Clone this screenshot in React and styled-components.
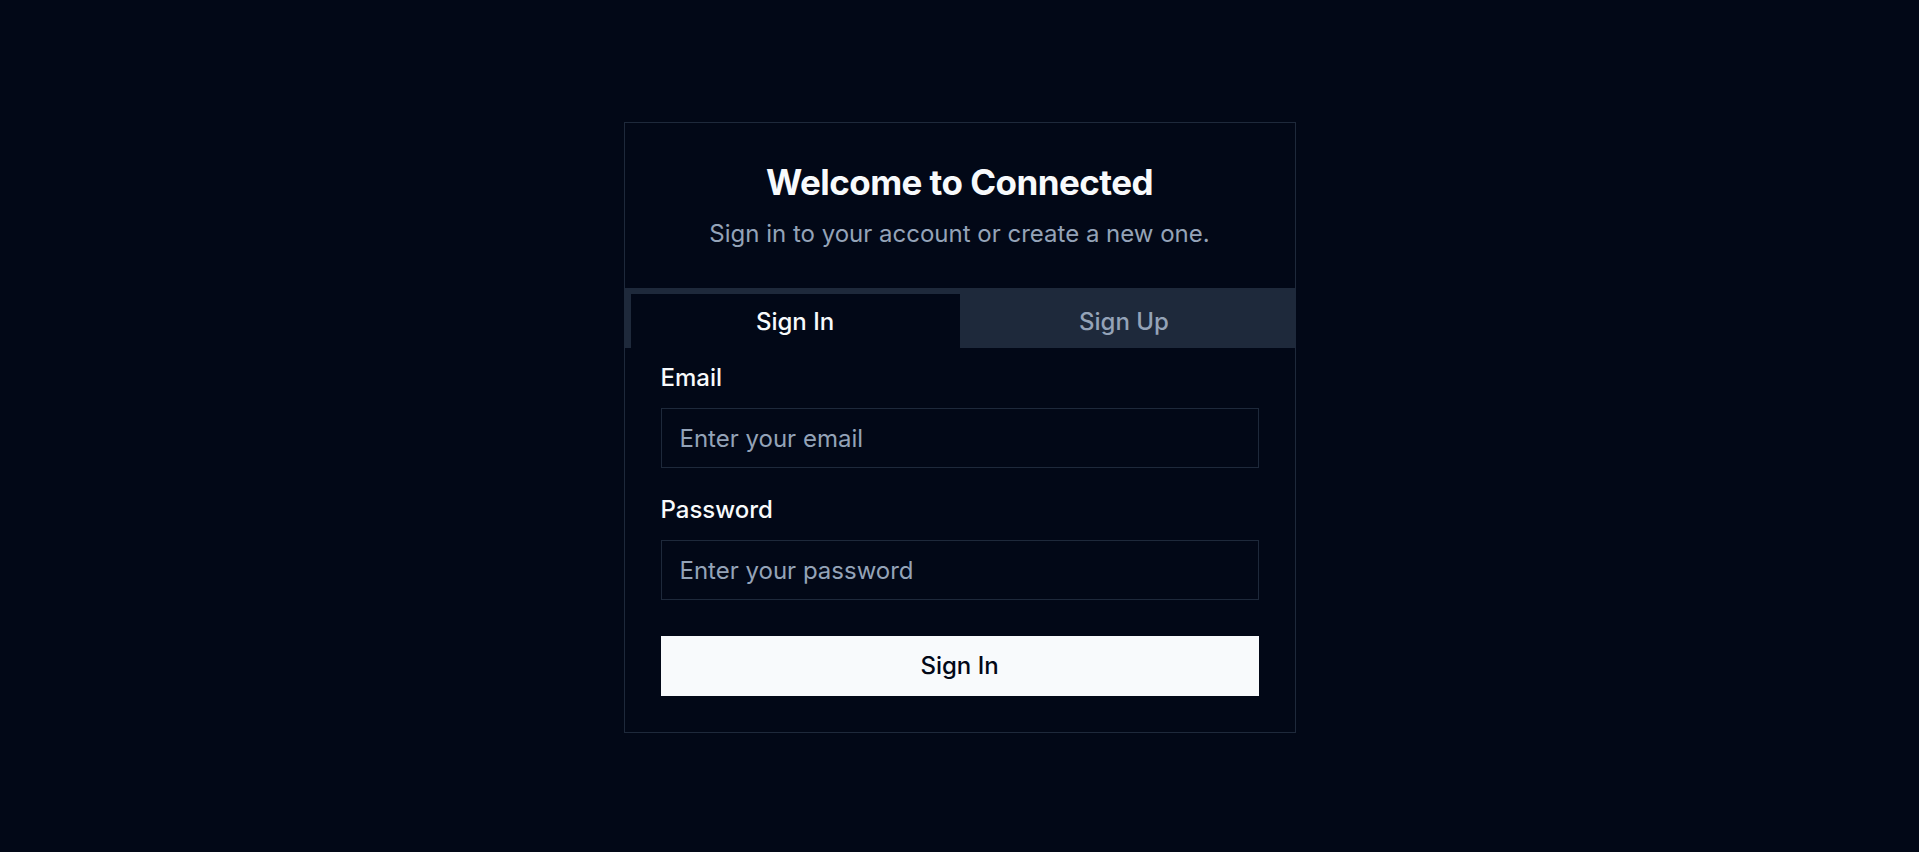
import React, { useState } from 'react';
import styled, { createGlobalStyle } from 'styled-components';

const GlobalStyle = createGlobalStyle`
  * { box-sizing: border-box; }
  body {
    margin: 0;
    background: #020817;
    font-family: Inter, "Liberation Sans", sans-serif;
    color: #f8fafc;
  }
`;

const Page = styled.div`
  min-height: 100vh;
  display: flex;
  justify-content: center;
  align-items: flex-start;
  padding-top: 122px;
`;

const Card = styled.div`
  width: 672px;
  border: 1px solid #1e293b;
  background: #020817;
`;

const Header = styled.div`
  padding: 36px 36px 36px;
  text-align: center;
`;

const Title = styled.h1`
  margin: 0;
  font-size: 35px;
  line-height: 47px;
  font-weight: 700;
  letter-spacing: -0.55px;
  color: #f8fafc;
`;

const Subtitle = styled.p`
  margin: 10px 0 0;
  font-size: 24px;
  line-height: 36px;
  color: #94a3b8;
`;

const TabList = styled.div`
  display: grid;
  grid-template-columns: 1fr 1fr;
  height: 60px;
  padding: 6px 6px 0;
  background: #1e293b;
`;

const Tab = styled.button`
  border: none;
  outline: none;
  font-family: inherit;
  font-size: 24px;
  font-weight: 500;
  cursor: pointer;
  background: ${(p) => (p.$active ? '#020817' : 'transparent')};
  color: ${(p) => (p.$active ? '#f8fafc' : '#94a3b8')};
`;

const Form = styled.form`
  display: flex;
  flex-direction: column;
  padding: 12px 36px 36px;
`;

const Field = styled.div`
  display: flex;
  flex-direction: column;
  & + & { margin-top: 24px; }
`;

const Label = styled.label`
  font-size: 24px;
  line-height: 36px;
  font-weight: 500;
  color: #f8fafc;
  margin-bottom: 12px;
`;

const Input = styled.input`
  height: 60px;
  width: 100%;
  padding: 0 18px;
  border: 1px solid #1e293b;
  background: transparent;
  color: #f8fafc;
  font-family: inherit;
  font-size: 24px;
  outline: none;

  &::placeholder { color: #94a3b8; }
`;

const Submit = styled.button`
  margin-top: 36px;
  height: 60px;
  padding: 0 0 2px;
  border: none;
  background: #f8fafc;
  color: #020817;
  font-family: inherit;
  font-size: 24px;
  font-weight: 500;
  cursor: pointer;
`;

export default function App() {
  const [tab, setTab] = useState('signin');

  return (
    <>
      <GlobalStyle />
      <Page>
        <Card>
          <Header>
            <Title>Welcome to Connected</Title>
            <Subtitle>Sign in to your account or create a new one.</Subtitle>
          </Header>
          <TabList>
            <Tab $active={tab === 'signin'} onClick={() => setTab('signin')}>Sign In</Tab>
            <Tab $active={tab === 'signup'} onClick={() => setTab('signup')}>Sign Up</Tab>
          </TabList>
          <Form onSubmit={(e) => e.preventDefault()}>
            <Field>
              <Label htmlFor="email">Email</Label>
              <Input id="email" type="email" placeholder="Enter your email" />
            </Field>
            <Field>
              <Label htmlFor="password">Password</Label>
              <Input id="password" type="password" placeholder="Enter your password" />
            </Field>
            <Submit type="submit">Sign In</Submit>
          </Form>
        </Card>
      </Page>
    </>
  );
}
